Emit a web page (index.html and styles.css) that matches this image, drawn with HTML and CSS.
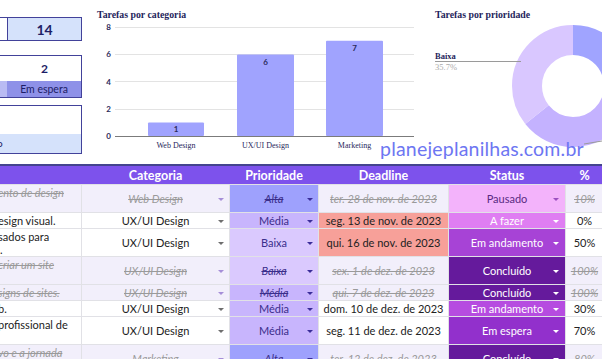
FILE: index.html
```html
<!DOCTYPE html>
<html lang="pt-BR">
<head>
    <meta charset="UTF-8">
    <meta name="viewport" content="width=device-width, initial-scale=1.0">
    <title>Gerenciador de Tarefas</title>
    <link rel="stylesheet" href="styles.css">
</head>
<body>

<div class="sheet">

    <!-- Dashboard -->
    <div class="top">
        <div class="kpis">
            <div class="kpi kpi-total">
                <span class="kpi-stub"></span>
                <span class="kpi-value">14</span>
            </div>
            <div class="kpi kpi-wait">
                <div class="kpi-num">2</div>
                <div class="kpi-label"><span class="kpi-stub"></span><span class="kpi-name">Em espera</span></div>
            </div>
            <div class="kpi kpi-done">
                <div class="kpi-num"></div>
                <div class="kpi-foot">o</div>
            </div>
        </div>

        <!-- Tarefas por categoria -->
        <svg class="bar-chart" width="338" height="164" viewBox="82 0 338 164">
            <text class="chart-title" x="97" y="18">Tarefas por categoria</text>
            <g class="grid">
                <line x1="115" y1="27.5" x2="414" y2="27.5"/>
                <line x1="115" y1="54.5" x2="414" y2="54.5"/>
                <line x1="115" y1="81.5" x2="414" y2="81.5"/>
                <line x1="115" y1="109.5" x2="414" y2="109.5"/>
            </g>
            <g class="axis-y">
                <text x="111" y="30">8</text>
                <text x="111" y="57">6</text>
                <text x="111" y="85">4</text>
                <text x="111" y="112">2</text>
                <text x="111" y="139">0</text>
            </g>
            <g class="bars">
                <rect x="148" y="122.4" width="56" height="13.6" rx="1"/>
                <rect x="237" y="54.4" width="57" height="81.6" rx="1"/>
                <rect x="326" y="40.8" width="57" height="95.2" rx="1"/>
            </g>
            <line class="baseline" x1="115" y1="136.5" x2="414" y2="136.5"/>
            <g class="bar-values">
                <text x="176" y="132">1</text>
                <text x="265.5" y="65">6</text>
                <text x="354.5" y="51">7</text>
            </g>
            <g class="axis-x">
                <text x="176" y="148">Web Design</text>
                <text x="265.5" y="148">UX/UI Design</text>
                <text x="354.5" y="148">Marketing</text>
            </g>
        </svg>

        <!-- Tarefas por prioridade -->
        <svg class="pie-chart" width="182" height="164" viewBox="420 0 182 164">
            <text class="chart-title" x="435" y="18">Tarefas por prioridade</text>
            <g transform="rotate(-90 573 86)">
                <circle class="slice alta" cx="573" cy="86" r="46" pathLength="100" stroke-dasharray="21.43 100"/>
                <circle class="slice media" cx="573" cy="86" r="46" pathLength="100" stroke-dasharray="42.86 100" stroke-dashoffset="-21.43"/>
                <circle class="slice baixa" cx="573" cy="86" r="46" pathLength="100" stroke-dasharray="35.71 100" stroke-dashoffset="-64.29"/>
            </g>
            <line class="leader" x1="435" y1="61.5" x2="521" y2="61.5"/>
            <line class="leader" x1="584" y1="144" x2="602" y2="141"/>
            <text class="pie-label" x="435" y="59">Baixa</text>
            <text class="pie-pct" x="435" y="70">35.7%</text>
        </svg>

        <div class="watermark">planejeplanilhas.com.br</div>
    </div>

    <!-- Tabela de tarefas -->
    <div class="table">
        <div class="row head">
            <div class="cell"></div>
            <div class="cell">Categoria</div>
            <div class="cell">Prioridade</div>
            <div class="cell">Deadline</div>
            <div class="cell">Status</div>
            <div class="cell">%</div>
        </div>

        <div class="row tall done">
            <div class="cell task">ento de design</div>
            <div class="cell cat">Web Design</div>
            <div class="cell pri alta">Alta</div>
            <div class="cell date">ter. 28 de nov. de 2023</div>
            <div class="cell status pausado">Pausado</div>
            <div class="cell pct">10%</div>
        </div>

        <div class="row short">
            <div class="cell task">esign visual.</div>
            <div class="cell cat">UX/UI Design</div>
            <div class="cell pri media">Média</div>
            <div class="cell date late">seg. 13 de nov. de 2023</div>
            <div class="cell status afazer">A fazer</div>
            <div class="cell pct">0%</div>
        </div>

        <div class="row tall">
            <div class="cell task">sados para<br>.</div>
            <div class="cell cat">UX/UI Design</div>
            <div class="cell pri baixa">Baixa</div>
            <div class="cell date late">qui. 16 de nov. de 2023</div>
            <div class="cell status andamento">Em andamento</div>
            <div class="cell pct">50%</div>
        </div>

        <div class="row tall done">
            <div class="cell task">criar um site</div>
            <div class="cell cat">UX/UI Design</div>
            <div class="cell pri baixa">Baixa</div>
            <div class="cell date">sex. 1 de dez. de 2023</div>
            <div class="cell status concluido">Concluído</div>
            <div class="cell pct">100%</div>
        </div>

        <div class="row short done">
            <div class="cell task">signs de sites.</div>
            <div class="cell cat">UX/UI Design</div>
            <div class="cell pri media">Média</div>
            <div class="cell date">qui. 7 de dez. de 2023</div>
            <div class="cell status concluido">Concluído</div>
            <div class="cell pct">100%</div>
        </div>

        <div class="row short">
            <div class="cell task">b.</div>
            <div class="cell cat">UX/UI Design</div>
            <div class="cell pri media">Média</div>
            <div class="cell date">dom. 10 de dez. de 2023</div>
            <div class="cell status andamento-claro">Em andamento</div>
            <div class="cell pct">30%</div>
        </div>

        <div class="row tall">
            <div class="cell task">profissional de</div>
            <div class="cell cat">UX/UI Design</div>
            <div class="cell pri media">Média</div>
            <div class="cell date">seg. 11 de dez. de 2023</div>
            <div class="cell status espera">Em espera</div>
            <div class="cell pct">70%</div>
        </div>

        <div class="row tall done">
            <div class="cell task">vo e a jornada</div>
            <div class="cell cat">Marketing</div>
            <div class="cell pri alta">Alta</div>
            <div class="cell date">ter. 12 de dez. de 2023</div>
            <div class="cell status concluido">Concluído</div>
            <div class="cell pct">80%</div>
        </div>
    </div>

</div>

</body>
</html>
```

FILE: styles.css
```css
body {
    margin: 0;
    font-family: Lato, "Noto Sans", sans-serif;
    background-color: white;
}

.sheet {
    position: relative;
    width: 602px;
    height: 359px;
    overflow: hidden;
}

/* Dashboard */
.top {
    display: flex;
    height: 164px;
}

.kpis {
    width: 82px;
    flex-shrink: 0;
    padding-top: 17px;
    display: flex;
    flex-direction: column;
}

.kpi {
    border: 1px solid #42429a;
    border-left: none;
    box-sizing: border-box;
}

.kpi-total {
    display: flex;
    height: 24px;
}

.kpi-stub {
    width: 7px;
    flex-shrink: 0;
    border-right: 1px solid #42429a;
}

.kpi-value {
    flex: 1;
    background-color: #d5e2fb;
    color: #1d1d66;
    font-weight: bold;
    font-size: 14px;
    display: flex;
    align-items: center;
    justify-content: center;
}

.kpi-wait {
    margin-top: 14px;
    height: 43px;
    display: flex;
    flex-direction: column;
}

.kpi-num {
    flex: 1;
    display: flex;
    align-items: center;
    justify-content: center;
    padding-left: 8px;
    font-size: 12px;
    font-weight: bold;
    color: #1d1d66;
}

.kpi-label {
    height: 16px;
    display: flex;
}

.kpi-label .kpi-stub {
    border-right: none;
    background-color: #b9bbf3;
}

.kpi-name {
    flex: 1;
    background-color: #8e91e8;
    color: #1d1d66;
    font-size: 10.5px;
    display: flex;
    align-items: center;
    justify-content: center;
}

.kpi-done {
    margin-top: 7px;
    height: 49px;
    display: flex;
    flex-direction: column;
}

.kpi-foot {
    height: 19px;
    background-color: #d5e2fb;
    color: #1d1d66;
    font-size: 10px;
    line-height: 19px;
    text-indent: -3px;
}

/* Charts */
.bar-chart,
.pie-chart {
    flex-shrink: 0;
    display: block;
}

.chart-title {
    font-family: "Liberation Serif", serif;
    font-weight: bold;
    font-size: 9.8px;
    fill: #1f1f5c;
}

.grid line {
    stroke: #e3e3e3;
    stroke-width: 1;
}

.baseline {
    stroke: #7b7b7b;
    stroke-width: 1.2;
}

.axis-y text {
    font-size: 8px;
    font-weight: bold;
    fill: #2a2a5a;
    text-anchor: end;
}

.bars rect {
    fill: #a0a3fe;
}

.bar-values text {
    font-size: 8px;
    font-weight: bold;
    fill: #2a2a5a;
    text-anchor: middle;
}

.axis-x text {
    font-family: "Liberation Serif", serif;
    font-size: 8px;
    fill: #1f1f5c;
    text-anchor: middle;
}

.slice {
    fill: none;
    stroke-width: 30;
}

.slice.alta {
    stroke: #a0a4ff;
}

.slice.media {
    stroke: #c4b2ff;
}

.slice.baixa {
    stroke: #d9c7ff;
}

.leader {
    stroke: #9a9a9a;
    stroke-width: 1;
}

.pie-label {
    font-family: "Liberation Serif", serif;
    font-weight: bold;
    font-size: 8.5px;
    fill: #1f1f5c;
}

.pie-pct {
    font-family: "Liberation Serif", serif;
    font-size: 8.5px;
    fill: #ababab;
}

.watermark {
    position: absolute;
    left: 380px;
    top: 137px;
    font-size: 19.5px;
    color: #6d76f2;
    letter-spacing: 0.2px;
}

/* Tabela */
.table {
    border-top: 2px solid #44448e;
    display: flex;
    flex-direction: column;
    gap: 1px;
    background-color: #e1e1e6;
    height: 195px;
}

.row {
    display: grid;
    grid-template-columns: 81px 147px 88px 129px 116px 37px;
    column-gap: 1px;
    flex-shrink: 0;
}

.row.tall {
    height: 27px;
}

.row.short {
    height: 15px;
}

.row.head {
    height: 18px;
    background-color: #7d52ec;
}

.head .cell {
    background-color: #7d52ec;
    color: white;
    font-weight: bold;
    font-size: 12.5px;
}

.cell {
    position: relative;
    background-color: white;
    color: #222;
    font-size: 11px;
    display: flex;
    align-items: center;
    justify-content: center;
    white-space: nowrap;
    overflow: hidden;
}

.cell.task {
    display: block;
    line-height: 13px;
    padding-top: 1px;
    text-indent: -2px;
}

.cat::after,
.pri::after,
.status::after {
    content: "";
    position: absolute;
    top: 50%;
    margin-top: -1px;
    border-left: 3px solid transparent;
    border-right: 3px solid transparent;
    border-top: 3px solid #6e6e6e;
}

.cat::after {
    right: 5px;
}

.pri::after {
    right: 5px;
    border-top-color: #3a2d99;
}

.status::after {
    right: 6px;
    border-top-color: white;
}

.pri {
    color: #3b2e8c;
}

.pri.alta {
    background-color: #9ea1fd;
}

.pri.media {
    background-color: #c8b5fd;
}

.pri.baixa {
    background-color: #dac9fe;
}

.date.late {
    background-color: #f7a099;
}

.status {
    color: white;
}

.status.pausado {
    background-color: #f3b3fb;
    color: #5a2a82;
}

.status.pausado::after {
    border-top-color: #9b4fc0;
}

.status.afazer {
    background-color: #df7ef2;
}

.status.andamento {
    background-color: #a743d6;
}

.status.andamento-claro {
    background-color: #b64ce0;
}

.status.concluido {
    background-color: #651a9c;
}

.status.espera {
    background-color: #9230cc;
}

/* Linhas concluidas / pausadas */
.done .cell {
    background-color: #f2effb;
    color: #9a9a9a;
    font-style: italic;
    text-decoration: line-through;
}

.done .cat::after {
    border-top-color: #a58ed8;
}

.done .pri {
    color: #3b2e8c;
}

.done .pri.alta {
    background-color: #9ea1fd;
}

.done .pri.media {
    background-color: #c8b5fd;
}

.done .pri.baixa {
    background-color: #dac9fe;
}

.done .status.pausado {
    background-color: #f3b3fb;
    color: #5a2a82;
    font-style: normal;
    text-decoration: none;
}

.done .status.concluido {
    background-color: #651a9c;
    color: white;
    font-style: normal;
    text-decoration: none;
}
```
